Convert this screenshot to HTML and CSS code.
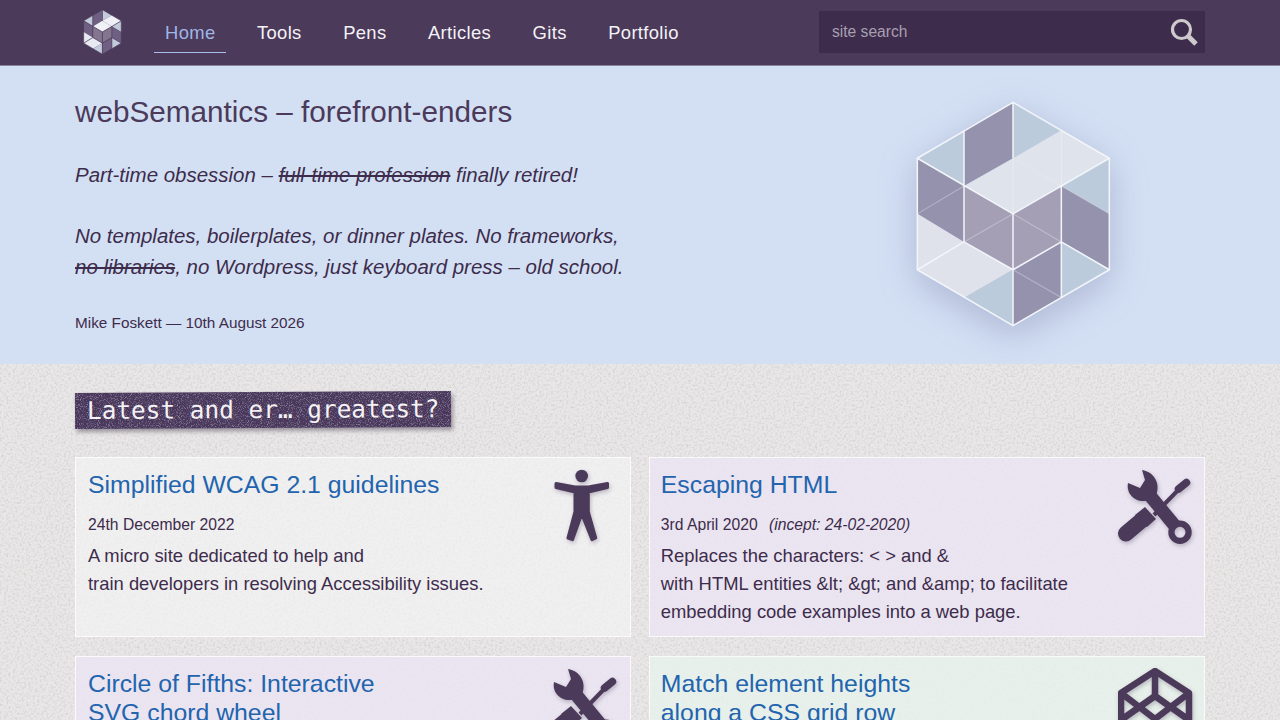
FILE: index.html
```html
<!DOCTYPE html>
<html lang="en">
<head>
<meta charset="utf-8">
<title>webSemantics</title>
<link rel="stylesheet" href="styles.css">
</head>
<body>
<svg class="defs" width="0" height="0" aria-hidden="true">
  <defs>
    <symbol id="hex" viewBox="70 30 597 687" preserveAspectRatio="none">
      <g class="faces">
        <polygon class="mid" points="80,207 220,123 220,290"/>
        <polygon class="dark" points="220,123 367,40 367,207 220,290"/>
        <polygon class="mid" points="367,40 512,123 367,207"/>
        <polygon class="light" points="512,123 656,207 512,290 367,207"/>
        <polygon class="light" points="367,207 512,290 367,373 220,290"/>
        <polygon class="mid" points="656,207 656,373 512,290"/>
        <polygon class="dark" points="512,290 656,373 656,540 512,457"/>
        <polygon class="mauve" points="367,373 512,290 512,457 367,540"/>
        <polygon class="mauve" points="220,290 367,373 367,540 220,457"/>
        <polygon class="dark" points="80,207 220,290 220,457 80,373"/>
        <polygon class="pale" points="80,373 220,457 80,540"/>
        <polygon class="pale" points="80,540 220,457 367,540 222,623"/>
        <polygon class="mid" points="222,623 367,540 367,707"/>
        <polygon class="dark" points="367,540 512,457 512,623 367,707"/>
        <polygon class="mid" points="512,457 656,540 512,623"/>
      </g>
      <path class="seams" d="M367 40L656 207V540L367 707L80 540V207ZM367 40V207M367 373V707M220 123V457M512 290V623M80 207L367 373L656 207M80 540L220 457L367 540L512 457L656 540"/>
      <path class="faint" d="M367 207V373M512 123V290M512 290L656 373M367 207L512 290M220 457L367 373L512 457M367 540L512 623M80 373L220 290"/>
    </symbol>
    <symbol id="tools" viewBox="0 0 75 75">
      <path class="blade" d="M36 46L64 17"/>
      <path class="tip" d="M60.500 20L68.500 13.500"/>
      <path class="grip" d="M8 64.500L24 51"/>
      <path class="solid" d="M17 46L27 38L38 50L29 58Z"/>
      <path class="solid" d="M24 1L27 11L22 19L10 14C8 24 16 33 27 32L38 27C43 14 36 3 24 1Z"/>
      <path class="shaft" d="M29 23L57 57"/>
      <circle class="ring" cx="62" cy="63.300" r="8.600"/>
    </symbol>
    <symbol id="pen" viewBox="0 0 75 75">
      <path class="pen-lines" d="M37 3L71 25V52L37 74L3 52V25ZM37 3V28M37 51V74M3 25L37 51L71 25M3 52L37 28L71 52"/>
    </symbol>
  </defs>
</svg>

<header class="topbar">
  <div class="topbar-inner">
    <svg class="site-logo"><use href="#hex"/></svg>
    <nav class="nav">
      <a class="nav-link is-current" href="#">Home</a>
      <a class="nav-link" href="#">Tools</a>
      <a class="nav-link" href="#">Pens</a>
      <a class="nav-link" href="#">Articles</a>
      <a class="nav-link" href="#">Gits</a>
      <a class="nav-link" href="#">Portfolio</a>
    </nav>
    <form class="search">
      <span class="search-text">site search</span>
      <svg class="search-icon" viewBox="0 0 28 28"><circle cx="11.500" cy="11.500" r="9"/><path d="M18 18L26 26"/></svg>
    </form>
  </div>
</header>

<section class="hero">
  <div class="hero-copy">
    <h1 class="hero-title">webSemantics – forefront-enders</h1>
    <p class="hero-line">Part-time obsession – <s>full-time profession</s> finally retired!</p>
    <p class="hero-line hero-gap">No templates, boilerplates, or dinner plates. No frameworks,<br><s>no libraries</s>, no Wordpress, just keyboard press – old school.</p>
    <p class="hero-author">Mike Foskett — 10th August 2026</p>
  </div>
  <svg class="hero-logo"><use href="#hex"/></svg>
</section>

<main class="content">
  <h2 class="stamp">Latest and er… greatest?</h2>
  <div class="cards">
    <article class="card card-plain">
      <svg class="card-icon person" viewBox="0 0 60 78">
        <circle cx="29.700" cy="8" r="6.300"/>
        <path class="figure" d="M4 15.500L23 19H36.300L55.500 15.500V19.500L36.300 24V43.700L43.700 70L40 71.700L29.700 46L20.500 71.700L16 70L23 43.700V24L4 19.500Z"/>
      </svg>
      <h3 class="card-title">Simplified WCAG 2.1 guidelines</h3>
      <p class="card-date">24th December 2022</p>
      <p class="card-text">A micro site dedicated to help and<br>train developers in resolving Accessibility issues.</p>
    </article>
    <article class="card card-tool">
      <svg class="card-icon"><use href="#tools"/></svg>
      <h3 class="card-title">Escaping HTML</h3>
      <p class="card-date">3rd April 2020 <em class="card-incept">(incept: 24-02-2020)</em></p>
      <p class="card-text">Replaces the characters: &lt; &gt; and &amp;<br>with HTML entities &amp;lt; &amp;gt; and &amp;amp; to facilitate<br>embedding code examples into a web page.</p>
    </article>
    <article class="card card-tool">
      <svg class="card-icon"><use href="#tools"/></svg>
      <h3 class="card-title">Circle of Fifths: Interactive<br>SVG chord wheel</h3>
    </article>
    <article class="card card-pen">
      <svg class="card-icon"><use href="#pen"/></svg>
      <h3 class="card-title">Match element heights<br>along a CSS grid row</h3>
    </article>
  </div>
</main>
</body>
</html>
```
FILE: styles.css
```css
* { box-sizing: border-box; }
html, body { margin: 0; height: 720px; overflow: hidden; }
body {
  font-family: "Liberation Sans", Arial, sans-serif;
  color: #3d2c4b;
  background-color: #e6e4e4;
  background-image: url("data:image/svg+xml,%3Csvg xmlns='http://www.w3.org/2000/svg' width='300' height='300'%3E%3Cfilter id='n' color-interpolation-filters='sRGB'%3E%3CfeTurbulence type='fractalNoise' baseFrequency='.45' numOctaves='2' stitchTiles='stitch'/%3E%3CfeColorMatrix values='1.500 0 0 0 .15 1.500 0 0 0 .14 1.500 0 0 0 .14 0 0 0 0 .13'/%3E%3C/filter%3E%3Crect width='300' height='300' filter='url(%23n)'/%3E%3C/svg%3E");
}
.defs { position: absolute; }

.topbar {
  height: 66px;
  background: #4b3a5a;
  border-bottom: 1px solid #8d8399;
}
.topbar-inner {
  display: flex;
  align-items: flex-start;
  height: 65px;
  padding: 11px 75px 0 83px;
}
.site-logo {
  width: 39px;
  height: 46px;
  margin-top: -2px;
  flex: none;
  --f-mid: #c3cad9;
  --f-dark: #6f5f82;
  --f-mauve: #84768f;
  --f-light: #f0f1f6;
  --f-pale: #e8eaf1;
  --seam: #4b3a5a;
  --seam-w: 10;
  --faint: transparent;
}
.nav { display: flex; gap: 19.500px; margin-left: 32px; }
.nav-link {
  display: block;
  height: 42px;
  padding: 11px 11px 0;
  font-size: 18.400px;
  line-height: 22px;
  letter-spacing: .35px;
  color: #f4f2f6;
  text-decoration: none;
}
.is-current { color: #9fb6e6; border-bottom: 1px solid #a9bde6; }
.search {
  display: flex;
  align-items: center;
  justify-content: space-between;
  width: 386px;
  height: 42px;
  margin-left: auto;
  padding: 0 7px 0 13px;
  background: #3d2c4b;
}
.search-text { font-size: 15.600px; color: #a99fb2; }
.search-icon { width: 28px; height: 28px; fill: none; stroke: #cdc9cd; }
.search-icon circle { stroke-width: 3.200; }
.search-icon path { stroke-width: 5; }

.hero {
  display: flex;
  justify-content: space-between;
  height: 298px;
  padding: 24px 65px 0 75px;
  background: #d3e0f4;
}
.hero-title { margin: 6px 0 0; font-size: 29.700px; line-height: 32px; font-weight: 400; color: #4b3a5a; }
.hero-line { margin: 31px 0 0; font-size: 20.480px; line-height: 31px; font-style: italic; color: #3d2c4b; }
.hero-gap { margin-top: 30px; }
.hero-author { margin: 31px 0 0; font-size: 15.300px; line-height: 20px; }
.hero-logo {
  width: 199px;
  height: 230px;
  margin: 9px 102px 0 0;
  flex: none;
  overflow: visible;
  filter: drop-shadow(0 10px 18px rgba(90, 90, 140, .3));
  --f-mid: #bccbdb;
  --f-dark: #9592ad;
  --f-mauve: #a59fb5;
  --f-light: #dfe3ec;
  --f-pale: #dfe2ea;
  --seam: #f2f5fa;
  --seam-w: 4.500;
  --faint: rgba(255, 255, 255, .3);
}
.mid { fill: var(--f-mid); }
.dark { fill: var(--f-dark); }
.mauve { fill: var(--f-mauve); }
.light { fill: var(--f-light); }
.pale { fill: var(--f-pale); }
.seams { fill: none; stroke: var(--seam); stroke-width: var(--seam-w); stroke-linejoin: round; }
.faint { fill: none; stroke: var(--faint); stroke-width: 3; }

.content { padding: 28px 75px 0; }
.stamp {
  width: 376px;
  height: 36px;
  margin: 0;
  padding: 0 0 0 12px;
  font: 400 24.400px/36px "DejaVu Sans Mono", monospace;
  color: #f4f2f4;
  white-space: nowrap;
  background-color: #48375a;
  background-image: url("data:image/svg+xml,%3Csvg xmlns='http://www.w3.org/2000/svg' width='200' height='200'%3E%3Cfilter id='n' color-interpolation-filters='sRGB'%3E%3CfeTurbulence type='fractalNoise' baseFrequency='1.100' numOctaves='2'/%3E%3CfeColorMatrix values='0 0 0 0 .72 0 0 0 0 .69 0 0 0 0 .78 0 0 0 1.800 -.85'/%3E%3C/filter%3E%3Crect width='200' height='200' filter='url(%23n)'/%3E%3C/svg%3E");
  box-shadow: 2px 3px 4px rgba(60, 50, 70, .45);
  transform: rotate(-.3deg);
}
.cards {
  display: grid;
  grid-template-columns: 1fr 1fr;
  grid-auto-rows: 180px;
  column-gap: 17.600px;
  row-gap: 18.500px;
  margin-top: 29px;
}
.card {
  padding: 12px 13px 0 12px;
  border: 1px solid rgba(255, 255, 255, .75);
}
.card:nth-child(even) { padding-left: 11px; }
.card-plain { background: rgba(244, 243, 245, .7); }
.card-tool { background: rgba(235, 229, 244, .8); }
.card-pen { background: rgba(231, 242, 236, .8); }
.card-icon {
  float: right;
  width: 75px;
  height: 75px;
  margin: -1px -2px 0 0;
  overflow: visible;
  filter: drop-shadow(1px 2px 2px rgba(60, 50, 80, .3));
}
.person { width: 60px; height: 78px; margin: -2px 5px 0 0; fill: #4b3a5a; }
.figure { fill: #4b3a5a; stroke: #4b3a5a; stroke-width: 3; stroke-linejoin: round; }
.solid { fill: #4b3a5a; }
.blade { fill: none; stroke: #4b3a5a; stroke-width: 4; }
.tip { fill: none; stroke: #4b3a5a; stroke-width: 7.500; stroke-linecap: round; }
.grip { fill: none; stroke: #4b3a5a; stroke-width: 16; stroke-linecap: round; }
.shaft { fill: none; stroke: #4b3a5a; stroke-width: 13; }
.ring { fill: none; stroke: #4b3a5a; stroke-width: 6.200; }
.pen-lines { fill: none; stroke: #4b3a5a; stroke-width: 6.500; stroke-linejoin: round; }
.card-title { margin: 0; font-size: 24.800px; line-height: 29px; font-weight: 400; color: #2264ae; }
.card-date { margin: 14px 0 0; font-size: 15.700px; line-height: 24px; color: #3d2c4b; }
.card-incept { margin-left: 7px; }
.card-text { margin: 5px 0 0; font-size: 18.400px; line-height: 28px; color: #3d2c4b; }
```
